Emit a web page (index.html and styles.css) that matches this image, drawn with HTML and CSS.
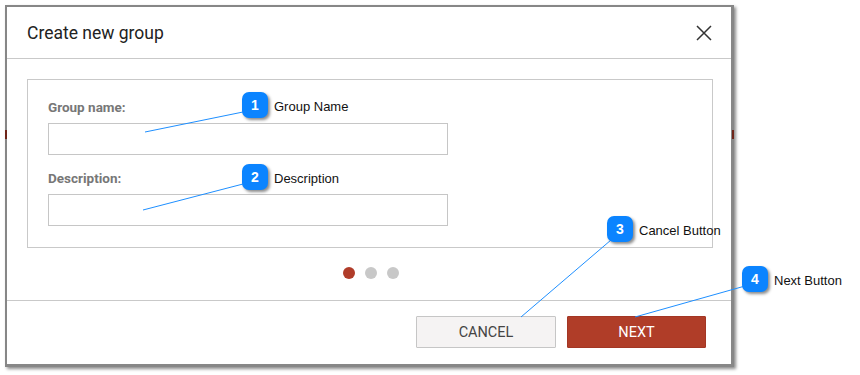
FILE: index.html
```html
<!DOCTYPE html>
<html lang="en">
<head>
  <meta charset="UTF-8">
  <title>Create new group</title>
  <link rel="stylesheet" href="styles.css">
</head>
<body>
  <div class="stage">
    <!-- Dialog window -->
    <div class="dialog">
      <div class="dialog-header">
        <h2>Create new group</h2>
        <svg class="close" width="16" height="16" viewBox="0 0 16 16">
          <path d="M1 1 L15 15 M15 1 L1 15" stroke="#333" stroke-width="1.5" fill="none"/>
        </svg>
      </div>

      <div class="dialog-body">
        <div class="form-box">
          <label class="field-label">Group name:</label>
          <input class="field-input" type="text">
          <label class="field-label second">Description:</label>
          <input class="field-input" type="text">
        </div>
        <div class="dots">
          <span class="dot active"></span>
          <span class="dot"></span>
          <span class="dot"></span>
        </div>
      </div>

      <div class="dialog-footer">
        <button class="btn btn-cancel">CANCEL</button>
        <button class="btn btn-next">NEXT</button>
      </div>
    </div>

    <!-- Bits of the page behind, peeking through the frame -->
    <span class="peek peek-left"></span>
    <span class="peek peek-right"></span>

    <!-- Callout lines -->
    <svg class="callout-lines" width="860" height="375">
      <g stroke="#1e8fff" stroke-width="1" fill="none">
        <line x1="243" y1="112" x2="145" y2="132"/>
        <line x1="243" y1="184" x2="143" y2="210"/>
        <line x1="611" y1="240" x2="521" y2="317"/>
        <line x1="745" y1="286" x2="635" y2="317"/>
      </g>
    </svg>

    <!-- Callout badges -->
    <div class="callout c1"><span class="badge">1</span><span class="callout-text">Group Name</span></div>
    <div class="callout c2"><span class="badge">2</span><span class="callout-text">Description</span></div>
    <div class="callout c3"><span class="badge">3</span><span class="callout-text">Cancel Button</span></div>
    <div class="callout c4"><span class="badge">4</span><span class="callout-text">Next Button</span></div>
  </div>
</body>
</html>
```

FILE: styles.css
```css
/* Page */
body {
  margin: 0;
  background: #fff;
  font-family: Roboto, "Liberation Sans", sans-serif;
}

.stage {
  position: relative;
  width: 860px;
  height: 375px;
  padding: 5px 0 0 5px;
  box-sizing: border-box;
}

/* Dialog */
.dialog {
  width: 729px;
  height: 362px;
  box-sizing: border-box;
  border: 2px solid #878787;
  border-right-width: 3px;
  border-bottom-width: 3px;
  background: #fff;
  box-shadow: 2px 2px 3px rgba(0, 0, 0, 0.45);
  display: flex;
  flex-direction: column;
}

.dialog-header {
  height: 51px;
  border-bottom: 1px solid #c9c9c9;
  display: flex;
  align-items: center;
  justify-content: space-between;
  padding: 0 19px 0 20px;
}

.dialog-header h2 {
  margin: 0;
  font-size: 17.5px;
  font-weight: 400;
  color: #222;
}

.dialog-body {
  padding: 20px 18px 0 20px;
}

.form-box {
  border: 1px solid #c9c9c9;
  padding: 19px 20px 20px 20px;
  display: flex;
  flex-direction: column;
  align-items: flex-start;
  height: 169px;
  box-sizing: border-box;
}

.field-label {
  font-size: 13.5px;
  font-weight: 700;
  color: #777;
  line-height: 16px;
  margin-bottom: 8px;
}

.field-label.second {
  margin-top: 15px;
}

.field-input {
  width: 400px;
  height: 32px;
  box-sizing: border-box;
  border: 1px solid #c6c6c6;
  margin: 0;
  padding: 0 8px;
}

/* Step dots */
.dots {
  display: flex;
  justify-content: center;
  gap: 10px;
  margin: 19px 0 21px 0;
  padding-left: 2px;
}

.dot {
  width: 12px;
  height: 12px;
  border-radius: 50%;
  background: #c8c8c8;
}

.dot.active {
  background: #b03c29;
}

/* Footer buttons */
.dialog-footer {
  border-top: 1px solid #c9c9c9;
  display: flex;
  justify-content: flex-end;
  gap: 11px;
  padding: 15px 25px 0 0;
}

.btn {
  width: 140px;
  height: 32px;
  font-family: Roboto, "Liberation Sans", sans-serif;
  font-size: 14.5px;
  border-radius: 1px;
}

.btn-cancel {
  background: #f5f3f3;
  border: 1px solid #c6c6c6;
  color: #444;
}

.btn-next {
  width: 139px;
  background: #b03d28;
  border: 1px solid #a33624;
  color: #fff;
}

/* Frame peeks */
.peek {
  position: absolute;
  top: 130px;
  width: 2px;
  height: 9px;
  background: #6e2418;
}

.peek-left { left: 5px; }
.peek-right { left: 732px; }

/* Callouts */
.callout-lines {
  position: absolute;
  left: 0;
  top: 0;
}

.callout {
  position: absolute;
  display: flex;
  align-items: center;
  gap: 6px;
}

.badge {
  width: 26px;
  height: 26px;
  border-radius: 7px;
  background: #0b84ff;
  color: #fff;
  font-family: "Liberation Sans", Arial, sans-serif;
  font-size: 14px;
  font-weight: 700;
  display: flex;
  align-items: center;
  justify-content: center;
  box-shadow: 2px 2px 3px rgba(0, 0, 0, 0.45);
}

.callout-text {
  font-family: "Liberation Sans", Arial, sans-serif;
  font-size: 13px;
  color: #111;
  margin-top: 2px;
}

.c1 { left: 242px; top: 92px; }
.c2 { left: 242px; top: 164px; }
.c3 { left: 607px; top: 216px; }
.c4 { left: 742px; top: 266px; }
```
